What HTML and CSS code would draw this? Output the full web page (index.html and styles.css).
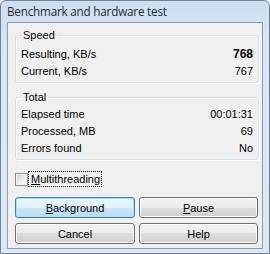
FILE: index.html
```html
<!DOCTYPE html>
<html>
<head>
<meta charset="utf-8">
<link rel="stylesheet" href="styles.css">
</head>
<body>
<div class="window">
  <div class="titlebar"><span class="title">Benchmark and hardware test</span></div>
  <div class="client">
    <fieldset class="group speed">
      <legend>Speed</legend>
      <div class="row"><span>Resulting, KB/s</span><span class="val strong">768</span></div>
      <div class="row"><span>Current, KB/s</span><span class="val">767</span></div>
    </fieldset>
    <fieldset class="group total">
      <legend>Total</legend>
      <div class="row"><span>Elapsed time</span><span class="val">00:01:31</span></div>
      <div class="row"><span>Processed, MB</span><span class="val">69</span></div>
      <div class="row"><span>Errors found</span><span class="val">No</span></div>
    </fieldset>
    <div class="check">
      <span class="box"></span>
      <span class="focus"><u>M</u>ultithreading</span>
    </div>
    <div class="buttons">
      <button class="btn default"><u>B</u>ackground</button>
      <button class="btn"><u>P</u>ause</button>
      <button class="btn">Cancel</button>
      <button class="btn">Help</button>
    </div>
  </div>
</div>
</body>
</html>
```

FILE: styles.css
```css
* { box-sizing: border-box; }
html, body { margin: 0; padding: 0; }
body {
  width: 270px;
  height: 254px;
  background: #ffffff;
  font-family: "Liberation Sans", Arial, sans-serif;
  font-size: 11px;
  color: #000;
}
.window {
  width: 270px;
  height: 254px;
  border: 1px solid #6e8297;
  border-radius: 6px 6px 0 0;
  background: linear-gradient(to bottom, #cddef0 0px, #d8e5f3 40px, #dde8f4 254px);
  padding: 0 6px 4px 6px;
  display: flex;
  flex-direction: column;
}
.titlebar {
  height: 21px;
  display: flex;
  align-items: center;
}
.title {
  font-family: "Open Sans", "Noto Sans", sans-serif;
  font-size: 11.7px;
  color: #1f2a36;
  letter-spacing: -0.2px;
  margin-top: -1px;
}
.client {
  flex: 1;
  background: #f0f0f0;
  border: 1px solid #8d9bab;
  padding: 0 0 0 7px;
  display: flex;
  flex-direction: column;
}
.group {
  width: 244px;
  margin: 0;
  padding: 4px 5px 2px 5px;
  border: 1px solid #d5dfe5;
  border-radius: 3px;
  box-shadow: 1px 1px 0 #ffffff, inset 1px 1px 0 #ffffff;
}
.group legend {
  padding: 0 2px;
  margin: 0;
  line-height: 13px;
  font-size: 11px;
}
.speed { margin-top: 6px; }
.total { margin-top: 8px; padding-top: 2px; }
.row {
  height: 17px;
  line-height: 17px;
  display: flex;
  justify-content: space-between;
}
.val { text-align: right; }
.strong { font-weight: bold; font-size: 12px; }
.check {
  margin-top: 12px;
  height: 14px;
  display: flex;
  align-items: center;
}
.box {
  width: 13px;
  height: 13px;
  border: 1px solid #8e8f8f;
  background: linear-gradient(135deg, #cdd0d4 0%, #eeeeee 60%, #f8f8f8 100%);
  box-shadow: inset 0 0 0 1px #f4f4f4;
  margin-right: 1px;
}
.focus {
  outline: 1px dotted #000;
  outline-offset: 0;
  padding: 0 1px 0 2px;
  line-height: 14px;
  height: 14px;
}
.buttons {
  margin-top: 11px;
  display: grid;
  grid-template-columns: 120px 119px;
  grid-auto-rows: 21px;
  column-gap: 4px;
  row-gap: 5px;
}
.btn {
  font-family: "Liberation Sans", Arial, sans-serif;
  font-size: 11px;
  color: #000;
  margin: 0;
  padding: 0;
  border: 1px solid #707070;
  border-radius: 3px;
  background: linear-gradient(to bottom, #f2f2f2 0%, #ebebeb 50%, #dddddd 50%, #cfcfcf 100%);
  box-shadow: inset 0 0 0 1px #fcfcfc;
}
.btn.default {
  border-color: #3c7fb1;
  background: linear-gradient(to bottom, #ebf5fb 0%, #e0eff9 50%, #cde6f5 50%, #bcdcef 100%);
  box-shadow: inset 0 0 0 1px #a6e3f9;
}
u { text-decoration: underline; text-underline-offset: 1px; }
```
